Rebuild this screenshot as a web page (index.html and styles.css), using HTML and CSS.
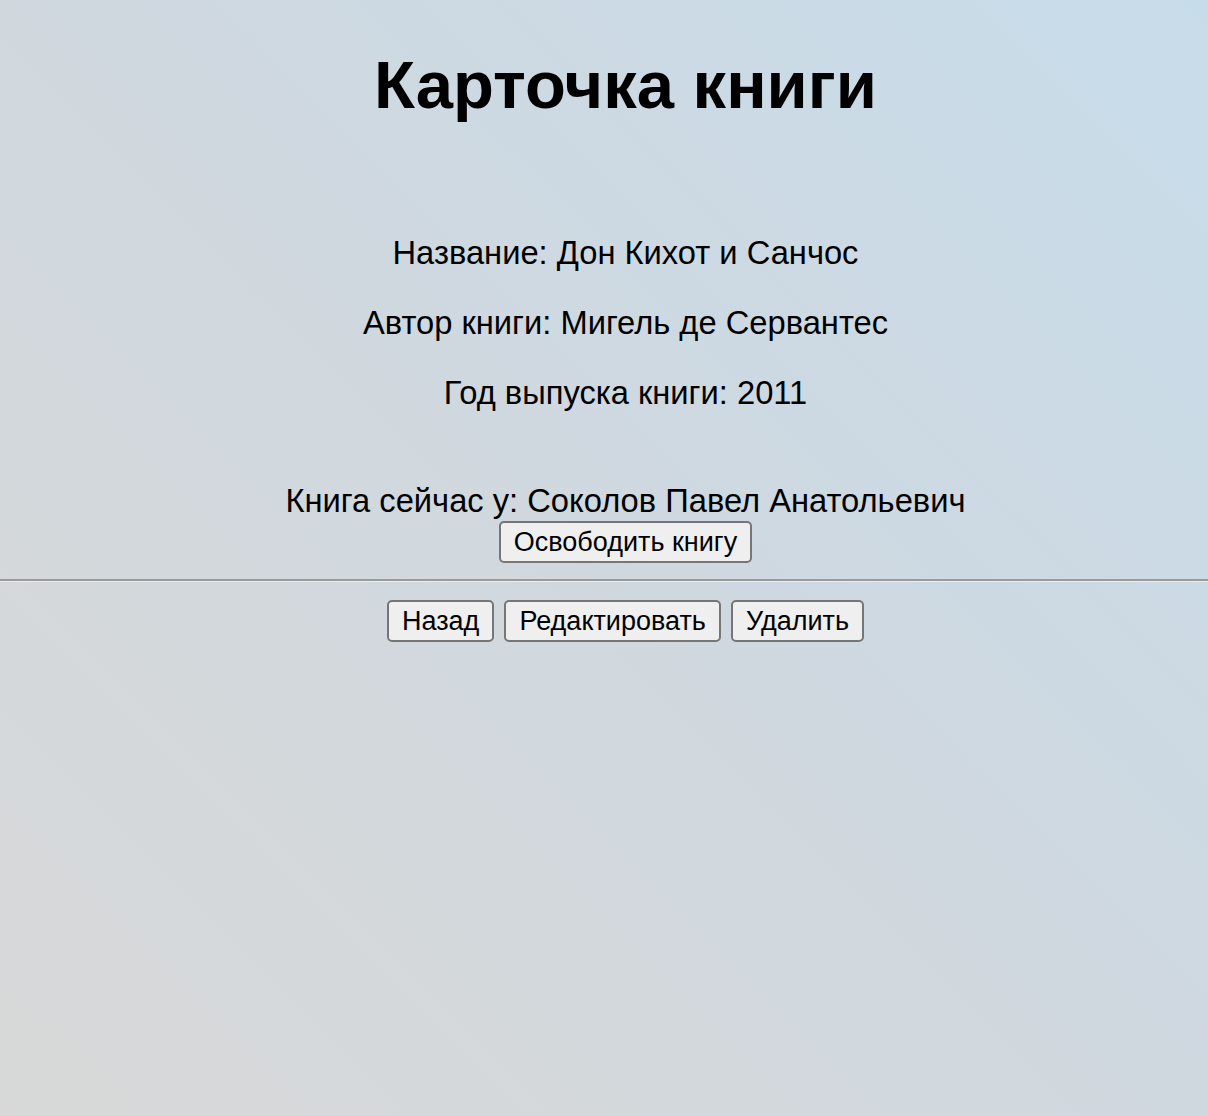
FILE: index.html
```html
<!DOCTYPE html>
<html lang="ru">
<head>
<meta charset="utf-8">
<title>Карточка книги</title>
<link rel="stylesheet" href="styles.css">
</head>
<body>
<div class="page">
  <h1 class="title">Карточка книги</h1>
  <div class="info">
    <p class="line">Название: Дон Кихот и Санчос</p>
    <p class="line">Автор книги: Мигель де Сервантес</p>
    <p class="line">Год выпуска книги: 2011</p>
  </div>
  <div class="owner">
    <span class="owner-text">Книга сейчас у: Соколов Павел Анатольевич</span>
    <button class="btn">Освободить книгу</button>
  </div>
</div>
<hr class="divider">
<div class="page actions">
  <button class="btn">Назад</button>
  <button class="btn">Редактировать</button>
  <button class="btn">Удалить</button>
</div>
</body>
</html>
```

FILE: styles.css
```css
html, body {
  margin: 0;
  padding: 0;
  height: 100%;
}
body {
  background: linear-gradient(45deg, #d8d8d8 0%, #d0d8df 50%, #c7dcea 100%);
  font-family: "Liberation Sans", Arial, sans-serif;
  color: #000;
}
.page {
  padding-left: 43px;
  display: flex;
  flex-direction: column;
  align-items: center;
  text-align: center;
}
.title {
  font-size: 67px;
  font-weight: bold;
  margin: 48px 0 0 0;
  line-height: 74px;
}
.info {
  margin-top: 112px;
  display: flex;
  flex-direction: column;
  gap: 33px;
}
.line {
  margin: 0;
  font-size: 32.7px;
  line-height: 37px;
}
.owner {
  margin-top: 71px;
  display: flex;
  flex-direction: column;
  align-items: center;
}
.owner-text {
  font-size: 32.7px;
  line-height: 37px;
}
.btn {
  font-family: "Liberation Sans", Arial, sans-serif;
  font-size: 27px;
  box-sizing: border-box;
  height: 42px;
  padding: 0 13px;
  margin: 0;
  background: #efefef;
  border: 2px solid #767676;
  border-radius: 5px;
  color: #000;
}
.owner .btn {
  margin-top: 2px;
}
.divider {
  margin: 16px 0 0 0;
  border: 0;
  border-top: 2px solid #9a9a9a;
  border-bottom: 1px solid #ececec;
  height: 0;
}
.actions {
  flex-direction: row;
  justify-content: center;
  gap: 10px;
  margin-top: 18px;
}
```
